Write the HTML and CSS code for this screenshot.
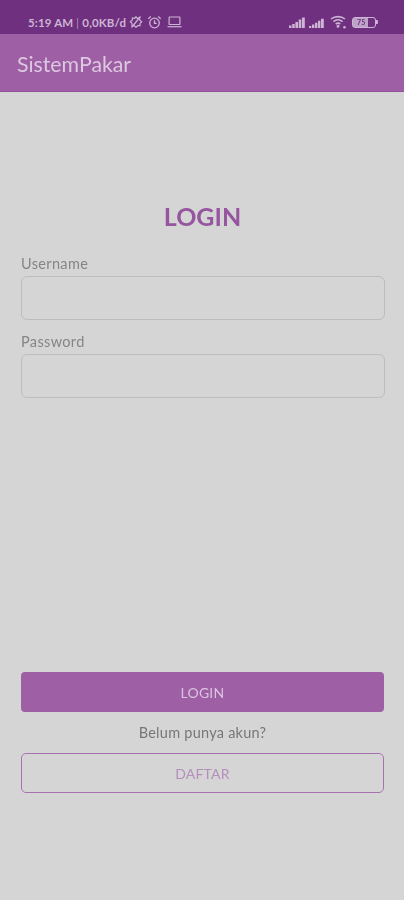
FILE: index.html

```html
<!DOCTYPE html>
<html lang="id">
<head>
  <meta charset="UTF-8" />
  <title>SistemPakar</title>
  <meta name="viewport" content="width=device-width, initial-scale=1" />
  <link rel="stylesheet" href="styles.css">
</head>
<body>
  <div class="statusbar">
    <div class="status-left">
      <span class="clock">5:19 AM</span>
      <span class="sep">|</span>
      <span class="speed">0,0KB/d</span>
      <svg class="ico" width="14" height="14" viewBox="0 0 14 14" fill="none" stroke="#cdb4d4" stroke-width="1.2">
        <path d="M7 1.800 8.300 3.400 10.500 3 10.800 5.300 12.700 6.800 11 8.400 11 10.700 8.800 10.700 7 12.300 5.200 10.700 3 10.700 3 8.400 1.300 6.800 3.200 5.300 3.500 3 5.700 3.400z" />
        <path d="M2.500 12.500 11.500 1.500" />
      </svg>
      <svg class="ico alarm" width="15" height="15" viewBox="0 0 15 15" fill="none" stroke="#cdb4d4" stroke-width="1.300">
        <circle cx="7.500" cy="8" r="4.800" />
        <path d="M7.500 5.300v3h2.200" />
        <path d="M1.300 3.700 3.800 1.500M13.700 3.700 11.200 1.500" />
      </svg>
      <svg class="ico laptop" width="15" height="12" viewBox="0 0 15 12" fill="none" stroke="#cdb4d4" stroke-width="1.200">
        <rect x="2.100" y="1" width="10.800" height="7.500" rx="0.600" />
        <path d="M0.500 10.700h14" />
      </svg>
    </div>
    <div class="status-right">
      <svg width="16" height="11" viewBox="0 0 16 11" fill="#cdb4d4">
        <path d="M0 8.500h2.500V11H0zM3.200 7h2.500v4H3.200zM6.400 5h2.600v6H6.400zM9.700 2.500h2.600V11H9.700zM13 .500h2.800V11H13z" />
      </svg>
      <svg class="sim2" width="15" height="10" viewBox="0 0 15 10" fill="#cdb4d4">
        <path d="M0 8h2.300v2H0zM3 6.500h2.400V10H3zM6 4.800h2.400V10H6zM9 2.800h2.400V10H9zM12 .800h2.800V10H12z" />
      </svg>
      <svg class="wifi" width="17" height="14" viewBox="0 0 17 14" fill="none" stroke="#cdb4d4" stroke-width="1.600">
        <path d="M1 4C5 .8 11 .8 15 4" />
        <path d="M3.400 6.600c2.800-2.200 6.400-2.200 9.200 0" />
        <path d="M5.700 9c1.500-1.100 3.100-1.100 4.600 0" />
        <circle cx="8" cy="11.200" r="0.700" fill="#cdb4d4" />
        <circle cx="14.500" cy="12.300" r="1.300" fill="#cdb4d4" stroke="none" />
      </svg>
      <div class="battery">
        <div class="battery-body">
          <span class="battery-num">75</span>
        </div>
        <div class="battery-tip"></div>
      </div>
    </div>
  </div>

  <header class="appbar">SistemPakar</header>

  <main class="content">
    <h1 class="title">LOGIN</h1>

    <label class="field-label" for="username">Username</label>
    <input class="field" id="username" type="text" />

    <label class="field-label second" for="password">Password</label>
    <input class="field" id="password" type="password" />

    <div class="spacer"></div>

    <button class="btn btn-primary" type="button">LOGIN</button>
    <p class="hint">Belum punya akun?</p>
    <button class="btn btn-outline" type="button">DAFTAR</button>
  </main>
</body>
</html>
```

FILE: styles.css

```css
* {
  box-sizing: border-box;
}
html, body {
  height: 100%;
}
body {
  margin: 0;
  font-family: Lato, 'Open Sans', sans-serif;
  background: #d5d5d5;
  display: flex;
  flex-direction: column;
  filter: blur(0.5px);
}
.statusbar {
  height: 34px;
  background: #6f307f;
  color: #cdb4d4;
  display: flex;
  align-items: center;
  justify-content: space-between;
  padding: 10px 26px 0 28px;
  font-size: 11.5px;
  font-weight: 700;
  letter-spacing: 0.15px;
}
.status-left,
.status-right {
  display: flex;
  align-items: center;
}
.sep {
  margin: 0 3px;
  font-weight: 400;
  opacity: 0.7;
}
.ico {
  margin-left: 3px;
}
.alarm {
  margin-left: 4px;
}
.laptop {
  margin-left: 5px;
}
.sim2 {
  margin-left: 4px;
  margin-top: 1px;
}
.wifi {
  margin-left: 6px;
}
.battery {
  display: flex;
  align-items: center;
  margin-left: 5px;
}
.battery-body {
  width: 24px;
  height: 11px;
  border: 1.5px solid #cdb4d4;
  border-radius: 3px;
  background: linear-gradient(90deg, #bfa2c8 0, #bfa2c8 70%, transparent 70%);
  display: flex;
  align-items: center;
  padding-left: 4px;
}
.battery-num {
  font-size: 7px;
  line-height: 1;
  color: #6f307f;
}
.battery-tip {
  width: 2px;
  height: 4px;
  background: #cdb4d4;
  border-radius: 0 1px 1px 0;
}
.appbar {
  height: 58px;
  background: #9e5fa5;
  border-bottom: 1px solid #94529c;
  color: #dcc8e0;
  font-size: 21.3px;
  line-height: 60px;
  padding-left: 17px;
}
.content {
  flex: 1;
  display: flex;
  flex-direction: column;
  padding: 108px 20px 107px 21px;
}
.title {
  margin: 0 0 23px;
  text-align: center;
  font-size: 25px;
  line-height: 32px;
  font-weight: 700;
  color: #95559f;
}
.field-label {
  font-size: 14.5px;
  line-height: 18px;
  letter-spacing: 0.35px;
  color: #858585;
  margin-bottom: 3px;
}
.field-label.second {
  margin-top: 13px;
}
.field {
  height: 44px;
  margin-right: -1px;
  background: #d5d5d5;
  border: 1.5px solid #bcbcbc;
  border-radius: 6px;
  outline: none;
}
.spacer {
  flex: 1;
}
.btn {
  height: 40px;
  border-radius: 4px;
  font-family: inherit;
  font-size: 14px;
  letter-spacing: 0.2px;
  padding: 0;
}
.btn-primary {
  background: #9e5fa5;
  border: none;
  color: #dcc4e0;
}
.btn-outline {
  background: transparent;
  border: 1.5px solid #a872b0;
  border-radius: 5px;
  color: #b58fbb;
}
.hint {
  margin: 12px 0 11px;
  text-align: center;
  font-size: 14.5px;
  letter-spacing: 0.25px;
  line-height: 18px;
  color: #777;
}
```
